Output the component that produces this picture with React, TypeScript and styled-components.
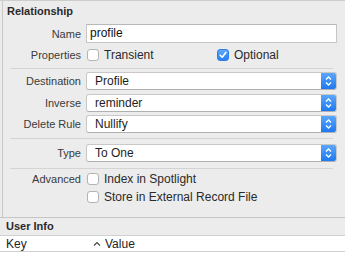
import React from 'react';
import styled, { createGlobalStyle } from 'styled-components';

const GlobalStyle = createGlobalStyle`
  body {
    margin: 0;
    background: #ececec;
    font-family: "Liberation Sans", Arial, sans-serif;
    font-size: 11px;
    color: #262626;
  }
`;

const Panel = styled.div`
  width: 345px;
  height: 263px;
  box-sizing: border-box;
  border-top: 1px solid #cdcdcd;
  display: flex;
  flex-direction: column;
  overflow: hidden;
`;

const Inspector = styled.div`
  flex: 1;
  margin-left: 2px;
  border-left: 1px solid #c9c9c9;
  display: flex;
  flex-direction: column;
  padding-right: 8px;
`;

const SectionTitle = styled.div`
  font-weight: bold;
  line-height: 14px;
  padding: 3px 0 0 4px;
  color: #2a2a2a;
`;

const Row = styled.div<{ $top: number; $h?: number }>`
  display: grid;
  grid-template-columns: 78px 1fr;
  column-gap: 5px;
  align-items: center;
  margin-top: ${p => p.$top}px;
  height: ${p => p.$h ?? 18}px;
`;

const Label = styled.div`
  text-align: right;
  color: #3a3a3a;
  white-space: nowrap;
`;

const TextField = styled.div`
  height: 19px;
  box-sizing: border-box;
  background: #fff;
  border: 1px solid #c6c6c6;
  border-top-color: #b8b8b8;
  padding: 0 3px;
  line-height: 17px;
  font-size: 12px;
  color: #111;
`;

const Checks = styled.div`
  display: flex;
  align-items: center;
`;

const Check = styled.label<{ $width?: number }>`
  display: flex;
  align-items: center;
  gap: 5px;
  width: ${p => (p.$width ? `${p.$width}px` : 'auto')};
  font-size: 12px;
  color: #2a2a2a;
  white-space: nowrap;
`;

const Box = styled.span<{ $on?: boolean }>`
  width: 12px;
  height: 12px;
  box-sizing: border-box;
  border-radius: 3px;
  border: 1px solid ${p => (p.$on ? '#2d7fe8' : '#b4b4b4')};
  background: ${p => (p.$on ? 'linear-gradient(#5ea8fb, #2780f2)' : '#fff')};
  display: flex;
  align-items: center;
  justify-content: center;
  margin-left: 1px;
`;

const Separator = styled.div<{ $top: number }>`
  height: 1px;
  background: #d4d4d4;
  margin: ${p => p.$top}px 4px 0 7px;
`;

const Popup = styled.div`
  height: 18px;
  box-sizing: border-box;
  display: flex;
  background: #fff;
  border: 1px solid #c8c8c8;
  border-bottom-color: #b0b0b0;
  border-radius: 3px;
  overflow: hidden;
`;

const PopupText = styled.div`
  flex: 1;
  padding-left: 8px;
  line-height: 16px;
  font-size: 12px;
  color: #1e1e1e;
`;

const Stepper = styled.div`
  width: 15px;
  background: linear-gradient(#5aa6fb, #1f79ef);
  display: flex;
  align-items: center;
  justify-content: center;
`;

const Spacer = styled.div`
  flex: 1;
`;

const UserInfo = styled.div`
  height: 45px;
  border-top: 1px solid #c6c6c6;
  display: flex;
  flex-direction: column;
`;

const UserInfoTitle = styled.div`
  height: 17px;
  line-height: 17px;
  padding-left: 6px;
  font-weight: bold;
  color: #2a2a2a;
  border-bottom: 1px solid #d0d0d0;
`;

const TableHead = styled.div`
  height: 15px;
  display: grid;
  grid-template-columns: 87px 1fr;
  align-items: center;
  background: #fff;
  border-bottom: 1px solid #cfcfcf;
  padding-left: 6px;
  font-size: 12px;
  color: #222;
`;

const SortHead = styled.div`
  display: flex;
  align-items: center;
  gap: 4px;
`;

const TableBody = styled.div`
  flex: 1;
  background: #fff;
`;

const CheckMark = () => (
  <svg width="8" height="8" viewBox="0 0 8 8">
    <path d="M1.2 4.2 L3.2 6.2 L6.8 1.4" fill="none" stroke="#fff" strokeWidth="1.6" strokeLinecap="round" strokeLinejoin="round" />
  </svg>
);

const Arrows = () => (
  <svg width="7" height="12" viewBox="0 0 7 12">
    <path d="M1 4.5 L3.5 2 L6 4.5 M1 7.5 L3.5 10 L6 7.5" fill="none" stroke="#fff" strokeWidth="1.3" />
  </svg>
);

const Caret = () => (
  <svg width="8" height="6" viewBox="0 0 8 6">
    <path d="M1 4.5 L4 1.5 L7 4.5" fill="none" stroke="#444" strokeWidth="1.1" />
  </svg>
);

const PopupField = ({ value }: { value: string }) => (
  <Popup>
    <PopupText>{value}</PopupText>
    <Stepper>
      <Arrows />
    </Stepper>
  </Popup>
);

export default function App() {
  return (
    <>
      <GlobalStyle />
      <Panel>
        <Inspector>
          <SectionTitle>Relationship</SectionTitle>
          <Row $top={6} $h={19}>
            <Label>Name</Label>
            <TextField>profile</TextField>
          </Row>
          <Row $top={5} $h={14}>
            <Label>Properties</Label>
            <Checks>
              <Check $width={130}>
                <Box />
                Transient
              </Check>
              <Check>
                <Box $on>
                  <CheckMark />
                </Box>
                Optional
              </Check>
            </Checks>
          </Row>
          <Separator $top={6} />
          <Row $top={3}>
            <Label>Destination</Label>
            <PopupField value="Profile" />
          </Row>
          <Row $top={4}>
            <Label>Inverse</Label>
            <PopupField value="reminder" />
          </Row>
          <Row $top={3}>
            <Label>Delete Rule</Label>
            <PopupField value="Nullify" />
          </Row>
          <Separator $top={5} />
          <Row $top={5}>
            <Label>Type</Label>
            <PopupField value="To One" />
          </Row>
          <Separator $top={6} />
          <Row $top={3} $h={14}>
            <Label>Advanced</Label>
            <Check>
              <Box />
              Index in Spotlight
            </Check>
          </Row>
          <Row $top={4} $h={14}>
            <Label />
            <Check>
              <Box />
              Store in External Record File
            </Check>
          </Row>
          <Spacer />
        </Inspector>
        <UserInfo>
          <UserInfoTitle>User Info</UserInfoTitle>
          <TableHead>
            <span>Key</span>
            <SortHead>
              <Caret />
              Value
            </SortHead>
          </TableHead>
          <TableBody />
        </UserInfo>
      </Panel>
    </>
  );
}
